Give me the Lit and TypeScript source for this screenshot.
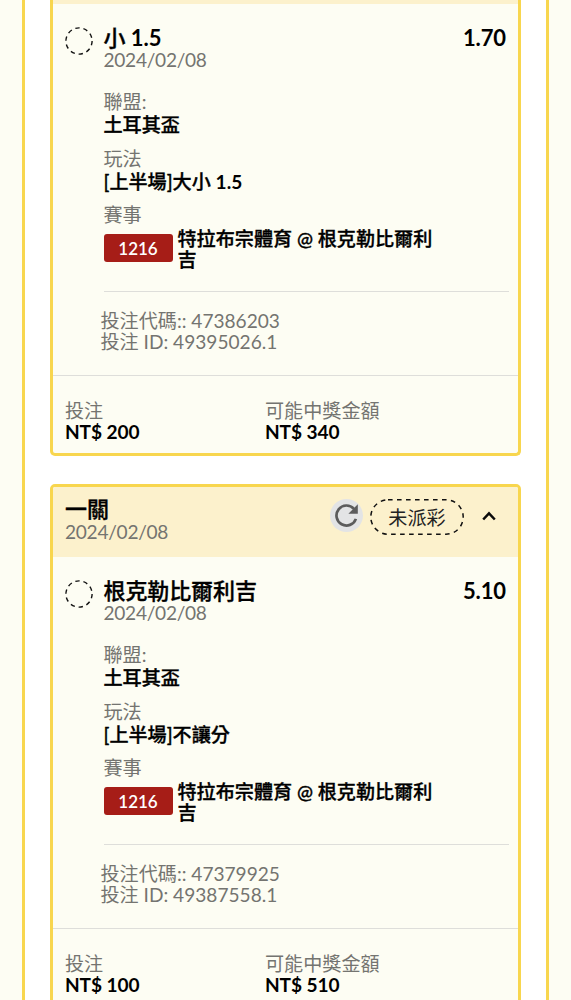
import { LitElement, html, css, nothing } from "lit";
import { customElement, property } from "lit/decorators.js";

interface Bet {
  clipped: boolean;
  pick: string;
  odds: string;
  play: string;
  code: string;
  id: string;
  stake: string;
  win: string;
}

const BETS: Bet[] = [
  { clipped: true, pick: "小 1.5", odds: "1.70", play: "[上半場]大小 1.5", code: "47386203", id: "49395026.1", stake: "NT$ 200", win: "NT$ 340" },
  { clipped: false, pick: "根克勒比爾利吉", odds: "5.10", play: "[上半場]不讓分", code: "47379925", id: "49387558.1", stake: "NT$ 100", win: "NT$ 510" },
];

// Latin words and numbers are set bold, Chinese characters medium.
const mixed = (text: string) =>
  text.split(/([A-Z0-9$.][A-Z0-9$. ]*)/).map((part, i) => (i % 2 ? html`<b>${part}</b>` : part));

@customElement("bet-card")
export class BetCard extends LitElement {
  @property({ attribute: false }) bet!: Bet;

  static styles = css`
    :host { display: block; }
    .card { box-sizing: border-box; border: 3px solid #f8d64e; border-radius: 5px; background: #fdfdf3; overflow: hidden; }
    .card.clipped { border-top: 0; border-radius: 0 0 5px 5px; }
    .header { box-sizing: border-box; height: 70px; background: #fcf1cc; display: flex; align-items: flex-start; padding: 10px 22px 0 12px; }
    .clipped .header { height: 4px; padding: 0; }
    .heading { flex: 1; }
    .strong { color: #000; font-weight: 500; -webkit-text-stroke: 0.35px #000; }
    .strong b { font-weight: 700; -webkit-text-stroke: 0; }
    .muted { color: #747470; }
    .date { letter-spacing: -0.27px; }
    .title { font-size: 22px; line-height: 24px; }
    .line { line-height: 21px; white-space: nowrap; }
    .refresh { width: 33px; height: 33px; margin: 2px 7px 0 0; display: block; }
    .status { display: block; margin-top: 2px; width: 94px; height: 36px; position: relative; }
    .outline { display: block; width: 94px; height: 36px; }
    .status-text { position: absolute; inset: 0; text-align: center; line-height: 37px; color: #222; }
    .chevron { display: block; width: 14px; height: 10px; margin: 14px 0 0 18px; }
    .body { display: grid; grid-template-columns: 38.5px 1fr; padding: 21px 9px 0 12px; }
    .ring { display: block; width: 28px; height: 28px; margin-top: 2px; }
    .top { display: flex; justify-content: space-between; padding-right: 3px; height: 24px; line-height: 25px; }
    .odds { letter-spacing: -0.1px; }
    .group { padding-top: 14px; }
    .field { padding-top: 13px; }
    .group .field:first-child { padding-top: 7px; }
    .group .field:last-child { padding-top: 12px; }
    .field .strong { padding-top: 2px; }
    .event { display: flex; align-items: flex-start; padding-top: 3px; gap: 5px; }
    .tag { width: 69px; height: 28px; margin-top: 6px; border-radius: 3px; background: #a61d17; color: #fff; font-size: 17px; font-weight: 600; line-height: 29px; text-align: center; }
    .teams { width: 262px; line-height: 21px; }
    .refs { border-top: 1px solid #dededa; margin-top: 21px; padding: 18px 0 23px; }
    .refs .line { margin-left: -3px; }
    .foot { border-top: 1px solid #dededa; display: grid; grid-template-columns: 200px 1fr; padding: 24px 12px 11px; }
    .foot b { letter-spacing: -0.1px; }
  `;

  private field(label: string, value: string) {
    return html`<div class="field"><div class="line muted">${label}</div><div class="line strong">${mixed(value)}</div></div>`;
  }

  private headerContent() {
    return html`
      <div class="heading">
        <div class="title strong">一關</div>
        <div class="line muted date">2024/02/08</div>
      </div>
      <svg class="refresh" viewBox="0 0 33 33">
        <circle cx="16.5" cy="16.5" r="16.5" fill="#e3e4e5" />
        <path d="M23.9 9.8 A10 10 0 1 0 25.9 19.9" fill="none" stroke="#5c5c5c" stroke-width="2.7" />
        <path d="M27.8 5.3V14.7H18.4Z" fill="#5c5c5c" />
      </svg>
      <div class="status">
        <svg class="outline" viewBox="0 0 94 36">
          <rect x="0.8" y="0.8" width="92.4" height="34.4" rx="17.2" fill="none" stroke="#111" stroke-width="1.5" stroke-dasharray="4.6 4.4" />
        </svg>
        <span class="status-text">未派彩</span>
      </div>
      <svg class="chevron" viewBox="0 0 14 10"><path d="M1.2 8.5L7 2.4L12.8 8.5" fill="none" stroke="#0a0a0a" stroke-width="2.5" /></svg>
    `;
  }

  render() {
    const b = this.bet;
    return html`
      <section class="card ${b.clipped ? "clipped" : ""}">
        <div class="header">${b.clipped ? nothing : this.headerContent()}</div>
        <div class="body">
          <svg class="ring" viewBox="0 0 28 28">
            <circle cx="14" cy="14" r="13.1" fill="none" stroke="#111" stroke-width="1.4" stroke-dasharray="4.4 3.83" />
          </svg>
          <div>
            <div class="top title strong"><span class="odds">${mixed(b.pick)}</span><span class="odds">${mixed(b.odds)}</span></div>
            <div class="line muted date">2024/02/08</div>
            <div class="group">
              ${this.field("聯盟:", "土耳其盃")}
              ${this.field("玩法", b.play)}
              <div class="field"><div class="line muted">賽事</div></div>
            </div>
            <div class="event">
              <div class="tag">1216</div>
              <div class="teams strong">特拉布宗體育 @ 根克勒比爾利吉</div>
            </div>
            <div class="refs">
              <div class="line muted">投注代碼:: ${b.code}</div>
              <div class="line muted">投注 ID: ${b.id}</div>
            </div>
          </div>
        </div>
        <div class="foot">
          <div><div class="line muted">投注</div><div class="line strong">${mixed(b.stake)}</div></div>
          <div><div class="line muted">可能中獎金額</div><div class="line strong">${mixed(b.win)}</div></div>
        </div>
      </section>
    `;
  }
}

@customElement("app-root")
export class AppRoot extends LitElement {
  static styles = css`
    :host { display: block; height: 1000px; overflow: hidden; background: #fdfdf3; font-family: Lato, "Noto Sans CJK TC", sans-serif; font-size: 19.1px; }
    .panel { box-sizing: border-box; margin: 0 22px; height: 1000px; overflow: hidden; background: #fff; border: solid #f8d64e; border-width: 0 3px; padding: 0 25px; display: flex; flex-direction: column; gap: 28px; }
    .panel > * { flex: none; }
  `;

  render() {
    return html`<main class="panel">${BETS.map((bet) => html`<bet-card .bet=${bet}></bet-card>`)}</main>`;
  }
}
